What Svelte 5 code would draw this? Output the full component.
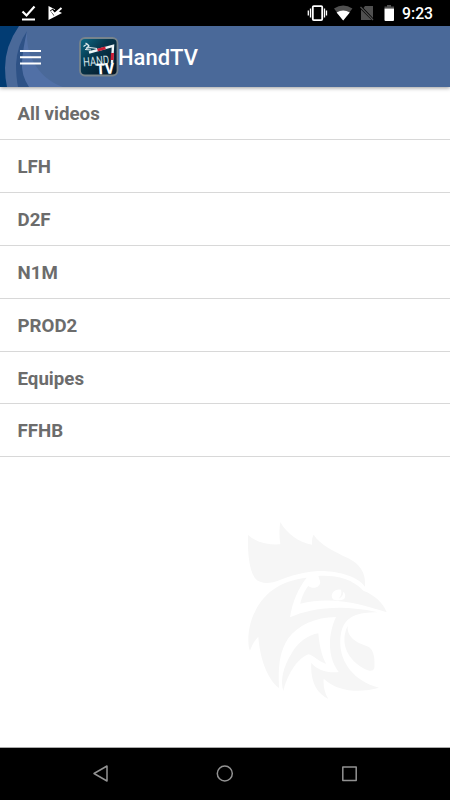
<script>
  const categories = ['All videos', 'LFH', 'D2F', 'N1M', 'PROD2', 'Equipes', 'FFHB']
</script>

<div class="screen">
  <div class="status">
    <svg class="notifications" viewBox="0 0 70 26" width="70" height="26">
      <path d="M22.500 11.500l4 4 8-9" fill="none" stroke="#fff" stroke-width="2.200" />
      <path d="M22 19.500h13" stroke="#fff" stroke-width="2" />
      <path d="M48.500 6l13.500 7-13.500 7z" fill="#fff" />
      <path d="M51.500 9.500l2.500 3.500 7.500-7.500" fill="none" stroke="#000" stroke-width="3.600" />
      <path d="M51.500 10.500l3 3.500 7-6" fill="none" stroke="#fff" stroke-width="2" />
    </svg>
    <svg class="system" viewBox="305 0 92 26" width="92" height="26">
      <rect x="312.800" y="6.100" width="9.400" height="14" rx="1" fill="none" stroke="#fff" stroke-width="1.800" />
      <path d="M310.500 8.500v9M308.300 10.500v5M324.500 8.500v9M326.500 10.500v5" stroke="#fff" stroke-width="1.300" />
      <path d="M334 8.500q9.200-6 18.400 0L343.200 20.500z" fill="#505050" />
      <path d="M336.600 12.500q6.600-4 13.200 0L343.200 20.500z" fill="#fff" />
      <path d="M365 6h8v12L363.500 8zM361 9.500l10.500 10.500H361z" fill="#505050" />
      <path d="M360.500 7l12.500 13" stroke="#505050" stroke-width="1.300" />
      <path d="M387 5h4v1.500h3V8.500h-9.500v-2h2.500z" fill="#505050" />
      <path d="M384.500 8.500h9.500V20q0 1-1 1h-7.500q-1 0-1-1z" fill="#fff" />
    </svg>
    <span class="clock">9:23</span>
  </div>

  <header>
    <svg class="swoosh" viewBox="0 0 70 61" width="70" height="61">
      <path d="M0 0h19Q5 20 5 42 5 52 7 61H0z" fill="#023c73" />
      <path d="M27 5Q26 22 33 35 43 54 63 61H27Q17 48 16 38 17 19 27 5z" fill="#5170a6" />
      <path d="M27 5Q17 19 16 38 16 51 18 61H29Q21 49 22 36 23 22 27 5z" fill="#2e5286" />
    </svg>
    <button aria-label="Menu">
      <svg viewBox="0 0 22 16" width="22" height="16">
        <path d="M0 2h21M0 8.200h21M0 14.400h21" stroke="#fff" stroke-width="2" />
      </svg>
    </button>
    <svg class="logo" viewBox="0 0 40 40" width="40" height="40">
      <defs>
        <linearGradient id="tile" x2="1" y2="1">
          <stop offset="0" stop-color="#0b6c88" />
          <stop offset=".4" stop-color="#07374d" />
          <stop offset="1" stop-color="#04111f" />
        </linearGradient>
      </defs>
      <rect x="1" y="1" width="37.500" height="37.500" rx="5" fill="url(#tile)" stroke="#77848c" stroke-width="1.800" />
      <path d="M4.500 9.500l3.500-2.500 2 2-3 2.500 4-1 7 1M6 12.500l6 .5M6.500 6l3 2" fill="none" stroke="#dce9ec" stroke-width="1.200" />
      <path d="M10 15.500L34 8.800 33 26" fill="none" stroke="#eef5f7" stroke-width="2.400" />
      <path d="M18.500 13.100l8-2.200M33.500 16l-.4 7" stroke="#cb1e35" stroke-width="3" />
      <text class="hand" x="4.500" y="29.500" textLength="26" lengthAdjust="spacingAndGlyphs" transform="rotate(-5 4.500 29.500)">HAND</text>
      <text class="tv" x="17.500" y="37.500" textLength="18" lengthAdjust="spacingAndGlyphs" transform="rotate(-3 17.500 37.500)">TV</text>
    </svg>
    <h1>HandTV</h1>
  </header>

  <main>
    <svg class="rooster" viewBox="0 0 495 600" width="165" height="200">
      <path d="M39 75C65 98 100 105 136 103C132 80 133 55 136 36C155 70 190 97 231 104C230 92 232 80 236 74C255 105 300 125 340 145C375 163 393 188 390 230C360 190 280 180 240 184C190 188 150 205 125 214C100 222 75 222 60 205C40 175 38 120 39 75Z" />
      <path d="M215 203C190 235 172 275 165 322C200 305 260 292 320 293C370 295 400 300 428 307C370 308 330 315 318 370C305 440 345 510 432 533C380 548 310 548 266 506C264 530 270 550 280 567C245 550 225 515 229 458C245 480 280 490 311 486C275 440 280 370 303 321C240 322 190 345 160 385C130 430 130 480 132 534C100 510 75 450 70 380C55 395 50 410 45 422C35 400 40 340 60 305C90 240 150 210 215 203Z" />
      <path d="M145 543C135 510 145 470 170 430C190 395 220 375 250 370C252 400 260 440 274 462C250 455 235 435 220 433C185 445 155 500 145 543Z" />
      <path d="M250 198C300 195 350 205 385 242C420 255 445 280 455 307C400 290 300 255 196 281C200 260 210 240 220 228C235 240 260 230 255 213Z" />
      <path d="M338 348C335 385 370 400 400 410C418 420 420 450 418 475C412 490 390 480 370 465C325 430 320 385 338 348Z" />
      <path class="eye" d="M318 239C295 236 284 255 294 268C301 273 320 272 328 266C333 258 330 249 325 245C325 255 320 262 311 266C318 258 321 250 318 239Z" />
    </svg>
    <ul>
      {#each categories as category}
        <li>{category}</li>
      {/each}
    </ul>
  </main>

  <nav>
    <svg viewBox="0 0 450 52" width="450" height="52">
      <path d="M94 25.500l13-7.500v15zM217.300 25.500a7.500 7.500 0 1 0 15 0a7.500 7.500 0 1 0-15 0zM342.800 19h13.400v13.400h-13.400z" />
    </svg>
  </nav>
</div>

<style>
  :global(body) {
    background: #fff;
  }

  .screen {
    display: flex;
    flex-direction: column;
    width: 450px;
    height: 800px;
    overflow: hidden;
    font-family: Roboto, sans-serif;
  }

  .status {
    display: flex;
    flex: none;
    height: 26px;
    background: #000;
    color: #fff;
  }

  .system {
    margin-left: 235px;
  }

  .clock {
    margin-left: 5px;
    font-size: 15.800px;
    font-weight: 500;
    line-height: 28px;
  }

  header {
    position: relative;
    z-index: 1;
    display: flex;
    flex: none;
    align-items: center;
    box-sizing: border-box;
    height: 61px;
    padding-left: 20px;
    background: #4a6999;
    box-shadow: 0 1px 4px rgba(0, 0, 0, .4);
    color: #fff;
  }

  .swoosh {
    position: absolute;
    top: 0;
    left: 0;
  }

  button {
    position: relative;
    display: flex;
    margin: 0 37px 0 0;
    padding: 0;
    border: 0;
    background: none;
  }

  .hand {
    fill: #d2e3e8;
    font-size: 12.500px;
  }

  .tv {
    fill: #fff;
    font-size: 15px;
    font-weight: 900;
  }

  h1 {
    margin: 1px 0 0 -1px;
    font-size: 22px;
    font-weight: 500;
  }

  main {
    position: relative;
    flex: 1;
  }

  .rooster {
    position: absolute;
    right: 50px;
    bottom: 37px;
    fill: #f6f6f6;
  }

  .eye {
    fill: #fff;
  }

  ul {
    margin: 0;
    padding: .300px 0 0;
    list-style: none;
  }

  li {
    box-sizing: border-box;
    height: 52.850px;
    padding-left: 17.500px;
    border-bottom: 1px solid #d8d8d8;
    color: #6c6c6c;
    font-size: 18.700px;
    font-weight: 700;
    line-height: 55px;
  }

  nav {
    flex: none;
    height: 52px;
    border-top: 1px solid #aaa;
    background: #000;
  }

  nav path {
    fill: none;
    stroke: #929292;
    stroke-width: 1.500;
    stroke-linejoin: round;
  }
</style>
